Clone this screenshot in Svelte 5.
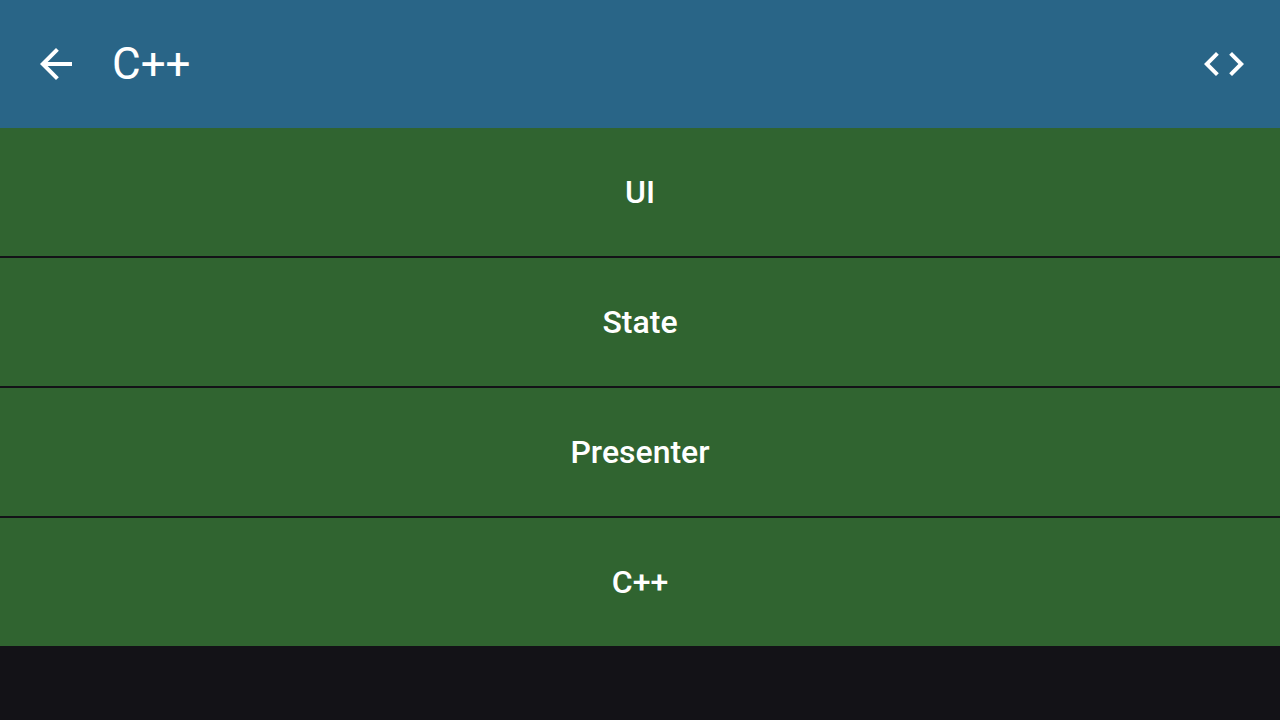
<script>
  const layers = ['UI', 'State', 'Presenter', 'C++'];
</script>

<header>
  <button class="icon" aria-label="Back">
    <svg viewBox="0 0 24 24" aria-hidden="true"><path d="M20 11H7.83l5.59-5.59L12 4l-8 8 8 8 1.41-1.41L7.83 13H20v-2z" /></svg>
  </button>
  <h1>C++</h1>
  <button class="icon" aria-label="View source">
    <svg viewBox="0 0 24 24" aria-hidden="true"><path d="M9.4 16.6L4.8 12l4.6-4.6L8 6l-6 6 6 6 1.4-1.4zm5.2 0l4.6-4.6-4.6-4.6L16 6l6 6-6 6-1.4-1.4z" /></svg>
  </button>
</header>
<main>
  {#each layers as layer}
    <button class="row">{layer}</button>
  {/each}
</main>

<style>
  :global(body) {
    margin: 0;
    background: #131217;
    font-family: Roboto, sans-serif;
  }
  header {
    display: flex;
    align-items: center;
    padding: 16px 8px;
    background: #296587;
    color: #fff;
  }
  button {
    border: 0;
    padding: 0;
    color: #fff;
    font-family: inherit;
    cursor: pointer;
  }
  .icon {
    display: grid;
    place-items: center;
    width: 96px;
    height: 96px;
    background: none;
  }
  svg {
    width: 48px;
    height: 48px;
    fill: currentColor;
  }
  h1 {
    flex: 1;
    margin: 0 0 0 8px;
    font-size: 44px;
    line-height: 56px;
    font-weight: 400;
  }
  main {
    display: flex;
    flex-direction: column;
    gap: 2px;
  }
  .row {
    padding: 40px 32px;
    background: #306430;
    font-size: 32px;
    line-height: 48px;
    font-weight: 500;
  }
</style>
